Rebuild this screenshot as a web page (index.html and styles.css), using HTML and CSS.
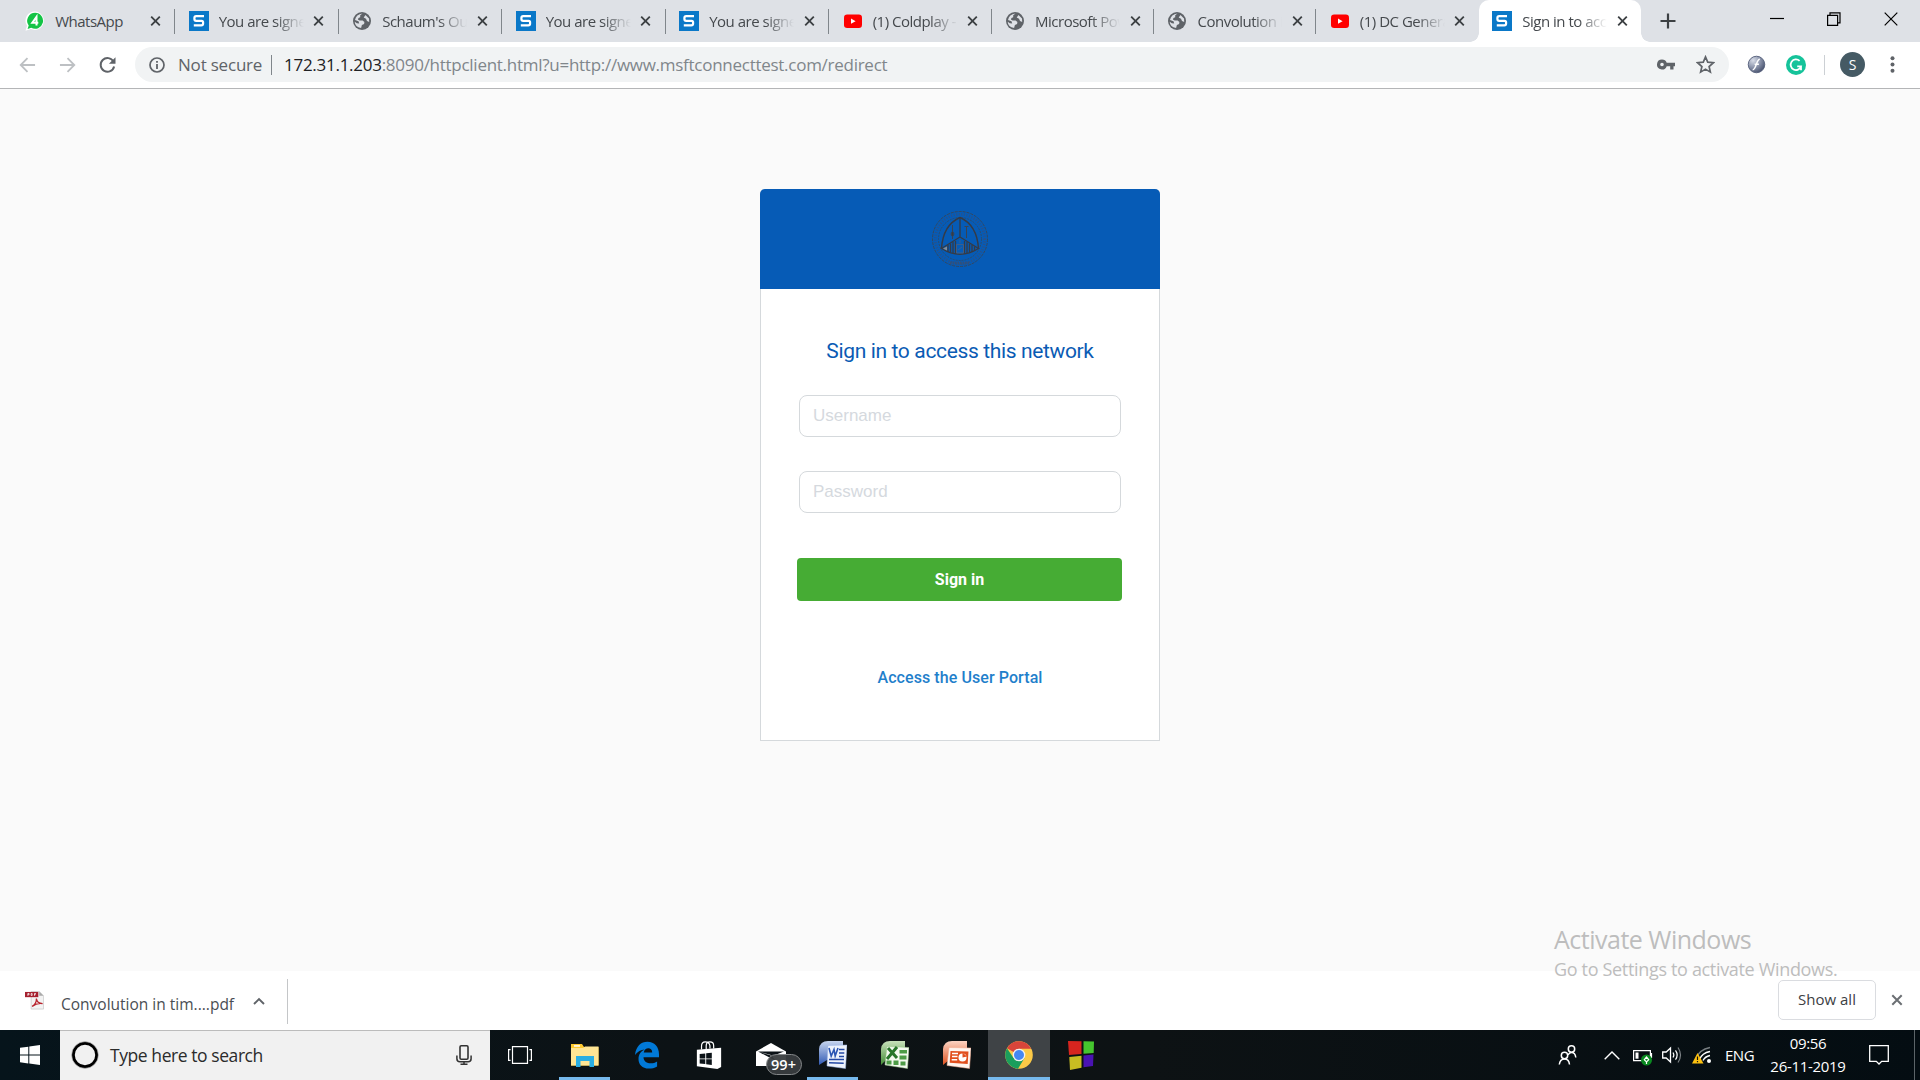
FILE: index.html
```html
<!DOCTYPE html>
<html lang="en">
<head>
<meta charset="utf-8">
<title>Sign in to access this network</title>
<link rel="stylesheet" href="styles.css">
</head>
<body>
<svg class="defs" aria-hidden="true">
  <symbol id="sophos" viewBox="0 0 20 20"><rect width="20" height="20" fill="#0a78c8"/><path d="M15 5.2H7.2Q5.4 5.2 5.4 7v1q0 1.8 1.8 1.8h5.4q1.5 0 1.5 1.6v1.1q0 1.8-1.8 1.8H4.8" fill="none" stroke="#fff" stroke-width="2.2"/></symbol>
  <symbol id="globe" viewBox="0 0 20 20"><circle cx="10" cy="10" r="9" fill="#5f6368"/><path d="M10.5 2.6 8.200 4.200v2l-1.700.8-.6 1.600 1.700.9h3l1.800 1.600-.3 2-2.200.8-.8 3.200Q3 16 2.700 10.800l2.100 1.400 2.400.4-.7-2.300-3.500-1.300Q4 3.600 10.500 2.600zM13.500 4l3.500 3.500.2 3.500-2.200-1-1-2.200-2.300-1.200z" fill="#dee1e6"/></symbol>
  <symbol id="youtube" viewBox="0 0 20 20"><rect x="1" y="3.500" width="18" height="13.500" rx="3.200" fill="#f00"/><path d="M8 7.600v5.200l4.600-2.600z" fill="#fff"/></symbol>
  <symbol id="close" viewBox="0 0 12 12"><path d="M1.300 1.300l9.400 9.400M10.700 1.300l-9.400 9.400" fill="none" stroke="currentColor" stroke-width="2"/></symbol>
</svg>

<header class="tabstrip">
  <div class="tab">
    <svg class="fav" viewBox="0 0 20 20"><path d="M10.200.500a9.200 9.200 0 1 1-4.300 17.600L.5 19.700l1.500-5A9.200 9.200 0 0 1 10.200.5z" fill="#fff"/><path d="M10.200 1.800a8 8 0 1 1-4 15L2.600 18l1.100-3.500a8 8 0 0 1 6.500-12.700z" fill="#14c446"/><path d="M11.500 14.500V5.800L7.300 11.700h6" fill="none" stroke="#fff" stroke-width="2"/></svg>
    <span class="label">WhatsApp</span><svg class="x"><use href="#close"/></svg>
  </div>
  <div class="tab"><svg class="fav"><use href="#sophos"/></svg><span class="label fade">You are signed</span><svg class="x"><use href="#close"/></svg></div>
  <div class="tab"><svg class="fav"><use href="#globe"/></svg><span class="label fade">Schaum's Outline</span><svg class="x"><use href="#close"/></svg></div>
  <div class="tab"><svg class="fav"><use href="#sophos"/></svg><span class="label fade">You are signed</span><svg class="x"><use href="#close"/></svg></div>
  <div class="tab"><svg class="fav"><use href="#sophos"/></svg><span class="label fade">You are signed</span><svg class="x"><use href="#close"/></svg></div>
  <div class="tab narrow"><svg class="fav"><use href="#youtube"/></svg><span class="label fade">(1) Coldplay -</span><svg class="x"><use href="#close"/></svg></div>
  <div class="tab narrow"><svg class="fav"><use href="#globe"/></svg><span class="label fade">Microsoft Power</span><svg class="x"><use href="#close"/></svg></div>
  <div class="tab narrow"><svg class="fav"><use href="#globe"/></svg><span class="label fade">Convolution in</span><svg class="x"><use href="#close"/></svg></div>
  <div class="tab narrow last"><svg class="fav"><use href="#youtube"/></svg><span class="label fade">(1) DC Generator</span><svg class="x"><use href="#close"/></svg></div>
  <div class="tab narrow active"><svg class="fav"><use href="#sophos"/></svg><span class="label fade">Sign in to access</span><svg class="x"><use href="#close"/></svg></div>
  <svg class="newtab" viewBox="0 0 16 16"><path d="M8 .5v15M.5 8h15" stroke="#3c4043" stroke-width="2.200"/></svg>
  <div class="wincontrols">
    <svg viewBox="0 0 14 14"><path d="M0 6.500h14" stroke="#000" stroke-width="1.200"/></svg>
    <svg viewBox="0 0 14 14"><path d="M.6 3.400h10v10H.6zM3 3.200V.800h10v10h-2.300" fill="none" stroke="#000" stroke-width="1.200"/></svg>
    <svg viewBox="0 0 14 14"><path d="M.7.700l12.600 12.600M13.300.700L.7 13.300" stroke="#000" stroke-width="1.200"/></svg>
  </div>
</header>

<nav class="toolbar">
  <svg class="nav off" viewBox="0 0 18 18"><path d="M17 9H2M9 1.800L1.800 9 9 16.200" fill="none" stroke="currentColor" stroke-width="1.900"/></svg>
  <svg class="nav off" viewBox="0 0 18 18"><path d="M1 9h15M9 1.800L16.200 9 9 16.200" fill="none" stroke="currentColor" stroke-width="1.900"/></svg>
  <svg class="nav" viewBox="0 0 18 18"><path d="M15.300 5.400A7.200 7.200 0 1 0 16 10.500" fill="none" stroke="currentColor" stroke-width="2.100"/><path d="M17.500.800v7h-7z" fill="currentColor"/></svg>
  <div class="omnibox">
    <svg class="info" viewBox="0 0 16 16"><circle cx="8" cy="8" r="7" fill="none" stroke="#5f6368" stroke-width="1.700"/><path d="M8 7v5M8 4v1.800" stroke="#5f6368" stroke-width="1.800"/></svg>
    <span class="secure">Not secure</span>
    <span class="url"><b>172.31.1.203</b>:8090/httpclient.html?u=http://www.msftconnecttest.com/redirect</span>
    <svg class="key" viewBox="0 0 18 10"><path d="M5 0a5 5 0 0 1 4.700 3.300H18v3.400h-1.500V10h-3.300V6.700H9.700A5 5 0 1 1 5 0zm0 3.200a1.800 1.800 0 1 0 0 3.600 1.800 1.800 0 0 0 0-3.600z" fill="#5f6368" fill-rule="evenodd"/></svg>
    <svg class="star" viewBox="0 0 18 18"><path d="M9 1.800l2.100 5 5.400.5-4.100 3.600 1.200 5.300L9 13.400l-4.600 2.800 1.200-5.300L1.500 7.300l5.400-.5z" fill="none" stroke="#5f6368" stroke-width="1.600"/></svg>
  </div>
  <svg class="flash" viewBox="0 0 20 20"><defs><radialGradient id="fl" cx=".3" cy=".25" r=".8"><stop offset="0" stop-color="#d8dde8"/><stop offset=".55" stop-color="#8a93aa"/><stop offset="1" stop-color="#4a5470"/></radialGradient></defs><circle cx="10" cy="10" r="8.700" fill="url(#fl)" stroke="#56617c"/><path d="M13.500 4.500c-4 0-3.500 11-7.500 11M8 9.800h4.500" fill="none" stroke="#fff" stroke-width="1.500"/></svg>
  <svg class="grammarly" viewBox="0 0 20 20"><circle cx="10" cy="10" r="10" fill="#15c39a"/><path d="M13.600 5.900A5.300 5.300 0 1 0 15 11.300h-3.800M15 10.500v4.700" fill="none" stroke="#fff" stroke-width="1.800"/></svg>
  <span class="tdiv"></span>
  <span class="avatar">S</span>
  <svg class="menu" viewBox="0 0 5 17"><g fill="#5f6368"><circle cx="2.500" cy="2.200" r="2"/><circle cx="2.500" cy="8.500" r="2"/><circle cx="2.500" cy="14.800" r="2"/></g></svg>
</nav>

<main class="page">
  <section class="card">
    <div class="brand">
      <svg viewBox="0 0 60 60" fill="none" stroke="#35475d">
        <circle cx="30" cy="30" r="27.500" stroke-width="1" stroke-dasharray="3 1"/>
        <circle cx="30" cy="30" r="24.700" stroke-width="2.500" stroke-dasharray="1 1.600" stroke="#2b5187"/>
        <circle cx="30" cy="30" r="21.500" stroke-width=".8" stroke-dasharray="2 1"/>
        <path d="M11.500 39.500Q13 16 30 8.500 47 16 48.500 39.500" stroke="#353b46" stroke-width="1.400"/>
        <path d="M30 8.500v19.500L11.500 39.500Q30 51 48.500 39.500L30 28" stroke="#353b46" stroke-width="1.300"/>
        <path d="M18 36v7M20.500 34.500v9M23 33v11M25.500 32v13M34.500 32v13M37 33v11M39.500 34.500v9M42 36v7M44.500 37.500v4" stroke="#353b46" stroke-width="1.300"/>
        <path d="M13 39.500l4-2v4z" fill="#858c95" stroke="none"/>
        <path d="M26.500 35.500h7v8.500h-7zM28 41l4-3M30 31v3" stroke="#4a6080" stroke-width=".8"/>
        <path d="M22.500 16v14M36.500 17v12M34.500 17.500h4" stroke="#3a4352" stroke-width="1"/>
        <ellipse cx="22.500" cy="25" rx="1.400" ry="2.200" fill="#353b46"/>
        <path d="M20 54h20" stroke-width="3" stroke-dasharray="1.500 1" stroke="#31507a"/>
      </svg>
    </div>
    <form class="login">
      <h1>Sign in to access this network</h1>
      <input type="text" placeholder="Username">
      <input type="password" placeholder="Password">
      <button type="button">Sign in</button>
      <a href="#">Access the User Portal</a>
    </form>
  </section>
  <aside class="watermark"><p class="wm1">Activate Windows</p><p class="wm2">Go to Settings to activate Windows.</p></aside>
</main>

<div class="downloads">
  <svg class="pdf" viewBox="0 0 20 20"><path d="M6.500.500H15l4.500 4.500v14H6.500z" fill="#f3f3f3" stroke="#ccc" stroke-width=".8"/><path d="M15 .500v4.500h4.500" fill="#aaa"/><path d="M0 1h14v5.500H0z" fill="#a5202f"/><path d="M3 5V2.600h1.300v1.300H3M6.500 2.600v2.100h1V2.600zM10 5V2.600h1.500M10 3.800h1.200" stroke="#fff" stroke-width=".8" fill="none"/><path d="M7.500 16.200c3-1.600 4.600-5 4.500-8.200.3 3 3 5 6.500 5.300-4-.7-8 .7-11 2.900z" fill="none" stroke="#b8252f" stroke-width="1.300"/></svg>
  <span class="fname">Convolution in tim....pdf</span>
  <svg class="up" viewBox="0 0 12 8"><path d="M1 7l5-5 5 5" fill="none" stroke="#5f6368" stroke-width="1.900"/></svg>
  <span class="ddiv"></span>
  <span class="showall">Show all</span>
  <svg class="dx"><use href="#close"/></svg>
</div>

<footer class="taskbar">
  <div class="start"><svg viewBox="0 0 20 20"><path d="M0 2.800L8.300 1.700v7.900H0zM9.300 1.500L20 0v9.600H9.300zM0 10.600h8.300v7.900L0 17.300zM9.300 10.600H20V20L9.300 18.600z" fill="#fff"/></svg></div>
  <div class="search">
    <svg class="cortana" viewBox="0 0 28 28"><circle cx="14" cy="14" r="11.700" fill="none" stroke="#000" stroke-width="3"/><circle cx="14" cy="14" r="13.400" fill="none" stroke="#aaa" stroke-width=".7"/></svg>
    <span>Type here to search</span>
    <svg class="mic" viewBox="0 0 16 20"><rect x="4" y=".8" width="8" height="13.500" rx="1.200" fill="none" stroke="#333" stroke-width="1.600"/><path d="M.9 10.500v3.200q0 3 3 3h8.200q3 0 3-3v-3.200M8 16.700v2.500M4.500 19.200h7" fill="none" stroke="#333" stroke-width="1.500"/></svg>
  </div>
  <div class="app view"><svg viewBox="0 0 24 18"><path d="M4.500.600h15v16.800h-15zM2.600 3.600H.6v10.800h2M21.400 3.600h2v10.800h-2" fill="none" stroke="#fff" stroke-width="1.200"/></svg></div>
  <div class="app open"><svg viewBox="0 0 28 28"><path d="M0 3h11l2 3h14.500v18.500H0z" fill="#fec930"/><path d="M0 7h12l2-1.500h13.500v19H0z" fill="#ffe594"/><path d="M3 4.200h6v1.500H3z" fill="#fff"/><path d="M5 26V15h18v11h-4.500v-6h-9v6z" fill="#2aaee3"/></svg></div>
  <div class="app"><svg viewBox="0 0 28 28"><path d="M2 14C3 5.200 8 .800 14.500.800 21.500.800 26 6 26 13.200v3H10.500c.3 7 9 7.300 13.600 4.200v5c-2.700 1.600-5.200 2.200-8.300 2.200C9.200 27.600 5.500 23.500 5.500 18c0-5 2.600-8 6-9.600C8 8.500 4.500 10.500 2 14zm8.800-2.600h8.400c0-5.600-7.600-5.500-8.400 0z" fill="#0179d7"/></svg></div>
  <div class="app"><svg viewBox="0 0 30 30"><path d="M2 9.500l26-2.200v20.500L24 30 2 27z" fill="#fff"/><path d="M7 9V5.500Q7 1 11 1t5 4v3M12 9V5q0-4 4-4t4 4v3" fill="none" stroke="#fff" stroke-width="1.300"/><path d="M5 14l6-.6v5.300H5zM12 13.200l6-.7v6.200h-6zM5 19.600h6v5.100l-6-.6zM12 19.600h6v6l-6-.7z" fill="#0b1217"/></svg></div>
  <div class="app mail"><svg viewBox="0 0 30 26"><path d="M0 9.500L15 1l15 8.500V24H0z" fill="#fff"/><path d="M2 9.500h26L16.500 14zM2 9.500l18 9.500-5-6z" fill="#0b1217"/></svg><span class="badge">99+</span></div>
  <div class="app open"><svg viewBox="0 0 28 28"><defs><linearGradient id="wg" x2="0" y2="1"><stop stop-color="#c7d5ee"/><stop offset="1" stop-color="#315ab4"/></linearGradient></defs><path d="M0 24V8Q1 0 9 0h15v19H8z" fill="url(#wg)"/><path d="M9 4.500L28 4l-1.500 23.500L8 25z" fill="#eef3fc" stroke="#9bb5e6" stroke-width=".5"/><path d="M10 7l2.200 8L15 8.500l1.200 6.500L19 7" fill="none" stroke="#2b56b3" stroke-width="1.600"/><path d="M20 8.500h5.500M20 12h5.300M20 15.500h5M10 18.500h15M10 21.800l14.700.4" stroke="#2449a5" stroke-width="1.500"/></svg></div>
  <div class="app"><svg viewBox="0 0 28 28"><defs><linearGradient id="xg" x2="0" y2="1"><stop stop-color="#c8e1bb"/><stop offset="1" stop-color="#438c35"/></linearGradient></defs><path d="M0 24V8Q1 0 9 0h15v19H5z" fill="url(#xg)"/><path d="M6 5.500L28 6.500l-1.500 21L4 24z" fill="#f3f9ef" stroke="#9bc98b" stroke-width=".5"/><path d="M7 7l9 10M16 6L6 18" stroke="#28752a" stroke-width="3"/><path d="M18.500 9h7.500v3.500h-7.500zM18.500 14.500h7v4h-7zM5.500 19.500h5v4h-5zM12.500 19.500h5v4.500h-5zM19.500 20.500h5v4h-5z" fill="#4d9b46"/></svg></div>
  <div class="app"><svg viewBox="0 0 28 28"><defs><linearGradient id="pg" x2="0" y2="1"><stop stop-color="#fbd3c2"/><stop offset="1" stop-color="#e1521f"/></linearGradient></defs><path d="M0 24V8Q1 0 9 0h15v19H6z" fill="url(#pg)"/><path d="M6 6.500L28 7l-1.500 20.500L4 24.500z" fill="#fff5ef" stroke="#f3a98a" stroke-width=".5"/><path d="M7.500 10l18 .5-.8 12.500-18-1.200z" fill="#e24f1d"/><path d="M9 12.500h6M9 15.500h5.500M8.700 18.800h5.500" stroke="#fff" stroke-width="1.600"/><circle cx="19.500" cy="16.500" r="4" fill="#fff"/><path d="M19.500 16.500V11.500l4.500 4z" fill="#e24f1d"/></svg></div>
  <div class="app current"><svg viewBox="0 0 28 28"><circle cx="14" cy="14" r="13.800" fill="#fbc947"/><path d="M14 14L2 7.200A13.800 13.800 0 0 1 26.200 7.700H14z" fill="#d9453a"/><path d="M2 7.200A13.800 13.800 0 0 0 13 27.800L19.500 17 8.500 17z" fill="#1b9e5c"/><circle cx="14" cy="14" r="6.300" fill="#f2f2f2"/><circle cx="14" cy="14" r="5" fill="#4587f3"/></svg></div>
  <div class="app"><svg class="squares" viewBox="0 0 28 30"><path d="M1 1l13.500.3V14L2 15z" fill="#d7251f"/><path d="M16.500 1.300L27 1.500l-.3 11.500-10.200.8z" fill="#45c52e"/><path d="M2.300 17l12.200-1.300v12L3 30z" fill="#c8bd22"/><path d="M16.500 15.500l10-1L26 26l-9.500 1.300z" fill="#4a13b3"/></svg></div>
  <div class="tray">
    <svg class="people" viewBox="0 0 18 20"><g fill="none" stroke="#fff" stroke-width="1.500"><circle cx="13" cy="4" r="3.200"/><circle cx="6" cy="10.500" r="3.200"/><path d="M.8 19.500Q1.500 14 6 14t5 5.500M9.500 9.800Q11 7.500 13 7.500q3.800 0 4.300 5"/></g></svg>
    <svg class="chev" viewBox="0 0 16 9"><path d="M.7 8.300L8 1l7.300 7.300" fill="none" stroke="#fff" stroke-width="1.400"/></svg>
    <svg class="batt" viewBox="0 0 20 17"><path d="M.6 1.600h16.800v10H.6zM18.500 4v5" fill="none" stroke="#fff" stroke-width="1.200"/><path d="M2.500 3.500h3v6.200h-3z" fill="#fff"/><circle cx="13.500" cy="11" r="5.500" fill="#0a8a20"/><path d="M13.500 8l2.200 2.700-2.200 2.200-2.200-2.200zM13.500 12v3" fill="none" stroke="#fff" stroke-width="1.200"/></svg>
    <svg class="vol" viewBox="0 0 20 18"><path d="M.7 6h3.500L8.500 2v14l-4.300-4H.7z" fill="none" stroke="#fff" stroke-width="1.300"/><path d="M11 6.500q1.700 2.500 0 5M13.500 4.300q3.300 4.700 0 9.400" fill="none" stroke="#fff" stroke-width="1.200"/><path d="M16 1.500q5 7.500 0 15" fill="none" stroke="#7b8084" stroke-width="1.200"/></svg>
    <svg class="wifi" viewBox="0 0 20 18"><g fill="none" stroke="#fff" stroke-width="1.300"><path d="M4 13Q7 3.500 18 1.500" stroke="#777d80"/><path d="M7.500 13.500Q10 7 18 5.500"/><path d="M11 14.500Q13 10.500 18 9.500"/></g><circle cx="17" cy="15" r="2" fill="#fff"/><path d="M5.500 7L11.500 17.500H0z" fill="#fdc110"/><path d="M5.500 10.500v3.500M5.500 15v1.300" stroke="#111" stroke-width="1.200"/></svg>
    <span class="lang">ENG</span>
    <div class="clock"><span>09:56</span><span class="date">26-11-2019</span></div>
    <svg class="note" viewBox="0 0 20 20"><path d="M.7.700h18.600v15.600h-6.600L10 19l-2.700-2.700H.7z" fill="none" stroke="#fff" stroke-width="1.300"/></svg>
  </div>
</footer>
</body>
</html>
```
FILE: styles.css
```css
* { box-sizing: border-box; }
body {
  margin: 0;
  width: 1920px;
  height: 1080px;
  overflow: hidden;
  display: flex;
  flex-direction: column;
  font-family: "Open Sans", "Noto Sans", sans-serif;
  background: #fff;
}
svg { display: block; flex: none; }
.defs { position: absolute; width: 0; height: 0; }
p, h1 { margin: 0; }

/* tab strip */
.tabstrip {
  flex: none;
  height: 42px;
  display: flex;
  align-items: stretch;
  padding-left: 11.7px;
  background: #dee1e6;
}
.tab {
  position: relative;
  flex: none;
  width: 163.5px;
  display: flex;
  align-items: center;
  padding: 0 0 1px 13.5px;
}
.tab.narrow { width: 162.4px; }
.tab::after {
  content: "";
  position: absolute;
  right: 0;
  top: 9px;
  width: 1px;
  height: 25px;
  background: #80868b;
}
.tab.last::after { display: none; }
.fav { width: 20px; height: 20px; }
.label {
  width: 85px;
  margin-left: 10px;
  overflow: hidden;
  white-space: nowrap;
  font-size: 15px;
  line-height: 22px;
  letter-spacing: -0.5px;
  color: #45494d;
}
.fade {
  -webkit-mask-image: linear-gradient(to right, #000 56px, transparent 85px);
  mask-image: linear-gradient(to right, #000 56px, transparent 85px);
}
.x { width: 11px; height: 12px; margin-left: 9.500px; color: #3c4043; }
.tab.active { background: #fff; border-radius: 10px 10px 0 0; }
.tab.active::before,
.tab.active::after {
  content: "";
  position: absolute;
  top: auto;
  bottom: 0;
  width: 9px;
  height: 9px;
  background: radial-gradient(circle at 0 0, transparent 8.500px, #fff 9px);
}
.tab.active::before { left: -9px; }
.tab.active::after { right: -9px; transform: scaleX(-1); }
.newtab { width: 16px; height: 16px; margin: 13px 0 0 19px; }
.wincontrols { margin-left: auto; display: flex; gap: 43px; padding: 11.500px 22px 0 0; }
.wincontrols svg { width: 14px; height: 14px; }

/* address row */
.toolbar {
  flex: none;
  height: 47px;
  display: flex;
  align-items: center;
  padding: 0 25px 1px 19px;
  border-bottom: 1px solid #b4b5b7;
  background: #fff;
}
.nav { width: 17px; height: 18px; margin-right: 23px; color: #5f6368; }
.nav.off { color: #bdc0c3; }
.omnibox {
  width: 1594px;
  height: 35px;
  margin-left: -4px;
  padding: 0 14px;
  display: flex;
  align-items: center;
  border-radius: 18px;
  background: #f1f3f4;
  font-size: 17px;
  line-height: 24px;
  white-space: nowrap;
}
.info { width: 16px; height: 16px; }
.secure {
  width: 94px;
  height: 20px;
  line-height: 20px;
  margin-left: 13px;
  border-right: 1px solid #80868b;
  color: #5f6368;
  letter-spacing: -0.2px;
}
.url { margin-left: 12px; color: #80868b; letter-spacing: -0.27px; }
.url b { font-weight: 400; color: #202124; }
.key { width: 18px; height: 11px; margin-left: auto; }
.star { width: 19px; height: 19px; margin-left: 21px; }
.flash { width: 19px; height: 19px; margin-left: 18px; }
.grammarly { width: 20px; height: 20px; margin-left: 20px; }
.tdiv { width: 1px; height: 20px; margin-left: 18px; background: #ccd0d4; }
.avatar {
  width: 25px;
  height: 25px;
  margin-left: 15px;
  border-radius: 50%;
  background: #455a64;
  color: #fff;
  font: 14px/25px "Open Sans", sans-serif;
  text-align: center;
}
.menu { width: 5px; height: 17px; margin-left: auto; }

/* captive portal page */
.page {
  position: relative;
  flex: none;
  height: 882px;
  display: flex;
  flex-direction: column;
  align-items: center;
  padding-top: 100px;
  background: #fafafa;
}
.card {
  width: 400px;
  height: 552px;
  border: 1px solid #d5d9dc;
  border-top: 0;
  border-radius: 5px 5px 0 0;
  background: #fff;
}
.brand {
  height: 100px;
  margin: 0 -1px;
  padding-top: 20px;
  display: flex;
  justify-content: center;
  border-radius: 5px 5px 0 0;
  background: #065bb6;
}
.brand svg { width: 60px; height: 60px; }
.login { display: flex; flex-direction: column; align-items: center; padding-top: 48px; }
.login h1 {
  height: 28px;
  font: 400 21px/29px Roboto, sans-serif;
  letter-spacing: -0.36px;
  color: #0a5bb4;
}
.login input {
  width: 322px;
  height: 42px;
  margin: 30px 0 0;
  padding: 0 13px;
  border: 1px solid #d5d9dc;
  border-radius: 8px;
  background: #fff;
  font: 17px "Liberation Sans", Arial, sans-serif;
}
.login input + input { margin-top: 34px; }
.login input::placeholder { color: #d5d9de; opacity: 1; }
.login button {
  width: 325px;
  height: 43px;
  margin: 45px 1px 0 0;
  padding: 0;
  border: 0;
  border-radius: 4px;
  background: #46ac34;
  color: #fff;
  font: 700 16px/43px Roboto, sans-serif;
}
.login a {
  margin-top: 65px;
  font: 500 16px/24px Roboto, sans-serif;
  letter-spacing: 0.08px;
  color: #1f80cb;
  text-decoration: none;
}
.watermark {
  position: absolute;
  left: 1554px;
  top: 833px;
  color: #bdbdbd;
  white-space: nowrap;
}
.wm1 { font-size: 25px; line-height: 34px; letter-spacing: -0.5px; }
.wm2 { margin-top: 1px; font-size: 18px; line-height: 24px; letter-spacing: -0.33px; }

/* download shelf */
.downloads {
  flex: none;
  height: 59px;
  display: flex;
  align-items: center;
  padding-left: 25px;
}
.pdf { width: 19px; height: 19px; }
.fname {
  width: 192px;
  margin: 7px 0 0 17px;
  font-size: 15.5px;
  line-height: 24px;
  white-space: nowrap;
  color: #4a4e53;
}
.up { width: 12px; height: 8px; }
.ddiv { width: 1px; height: 45px; margin: 2px 0 0 22px; background: #c4c6c8; }
.showall {
  width: 98px;
  height: 40px;
  margin: -1px 0 0 auto;
  border: 1px solid #dadce0;
  border-radius: 5px;
  font-size: 15px;
  line-height: 37px;
  text-align: center;
  color: #3c4043;
}
.dx { width: 12px; height: 12px; margin: -1px 17px 0 15px; color: #6b6f73; }

/* taskbar */
.taskbar {
  flex: none;
  height: 50px;
  display: flex;
  background: linear-gradient(90deg, #06141b, #0c1215 35%, #0d1214 60%, #040d12);
  color: #fff;
}
.start { width: 60px; padding: 15px 20px; }
.start svg { width: 20px; height: 20px; }
.search {
  width: 430px;
  display: flex;
  align-items: center;
  padding: 0 18px 2px 11px;
  border-top: 1px solid #bcbcbc;
  background: #f1f1f1;
  color: #2b2b2b;
  font-size: 17.5px;
  letter-spacing: -0.43px;
}
.cortana { width: 28px; height: 28px; margin-right: 11px; }
.mic { width: 16px; height: 20px; margin-left: auto; }
.app {
  position: relative;
  width: 62px;
  display: flex;
  align-items: center;
  justify-content: center;
}
.app svg { width: 28px; height: 28px; }
.app svg.squares { height: 30px; }
.app.view svg { width: 24px; height: 18px; }
.app.view { width: 63.500px; padding-right: 3px; }
.app.open::after, .app.current::after {
  content: "";
  position: absolute;
  left: 5.500px;
  bottom: 0;
  width: 51px;
  height: 3px;
  background: #76b9ed;
}
.app.current { background: #3f4346; }
.app.current::after { left: 0; width: 100%; }
.app.mail svg { width: 30px; height: 26px; margin: 0; }
.badge {
  position: absolute;
  left: 26px;
  top: 24px;
  width: 36px;
  height: 21px;
  border: 1px solid #85888a;
  border-radius: 11px;
  background: rgba(57, 61, 63, .95);
  font-size: 14.5px;
  font-weight: 600;
  line-height: 19px;
  text-align: center;
}
.tray { margin-left: auto; display: flex; align-items: center; padding-right: 25px; position: relative; }
.tray::after { content: ""; position: absolute; right: 5px; top: 0; width: 1px; height: 50px; background: #5c6468; }
.people { width: 19px; height: 20px; }
.chev { width: 16px; height: 9px; margin-left: 27px; }
.batt { width: 20px; height: 17px; margin: 4px 0 0 13px; }
.vol { width: 20px; height: 18px; margin-left: 9px; }
.wifi { width: 20px; height: 18px; margin-left: 10px; }
.lang { width: 35px; margin-left: 13px; font-size: 15px; letter-spacing: -0.5px; }
.clock { width: 90px; margin-left: 3px; margin-right: 16px; display: flex; flex-direction: column; align-items: center; font-size: 15px; line-height: 23px; letter-spacing: -0.3px; }
.note { width: 20px; height: 20px; margin-right: 6px; }
```
